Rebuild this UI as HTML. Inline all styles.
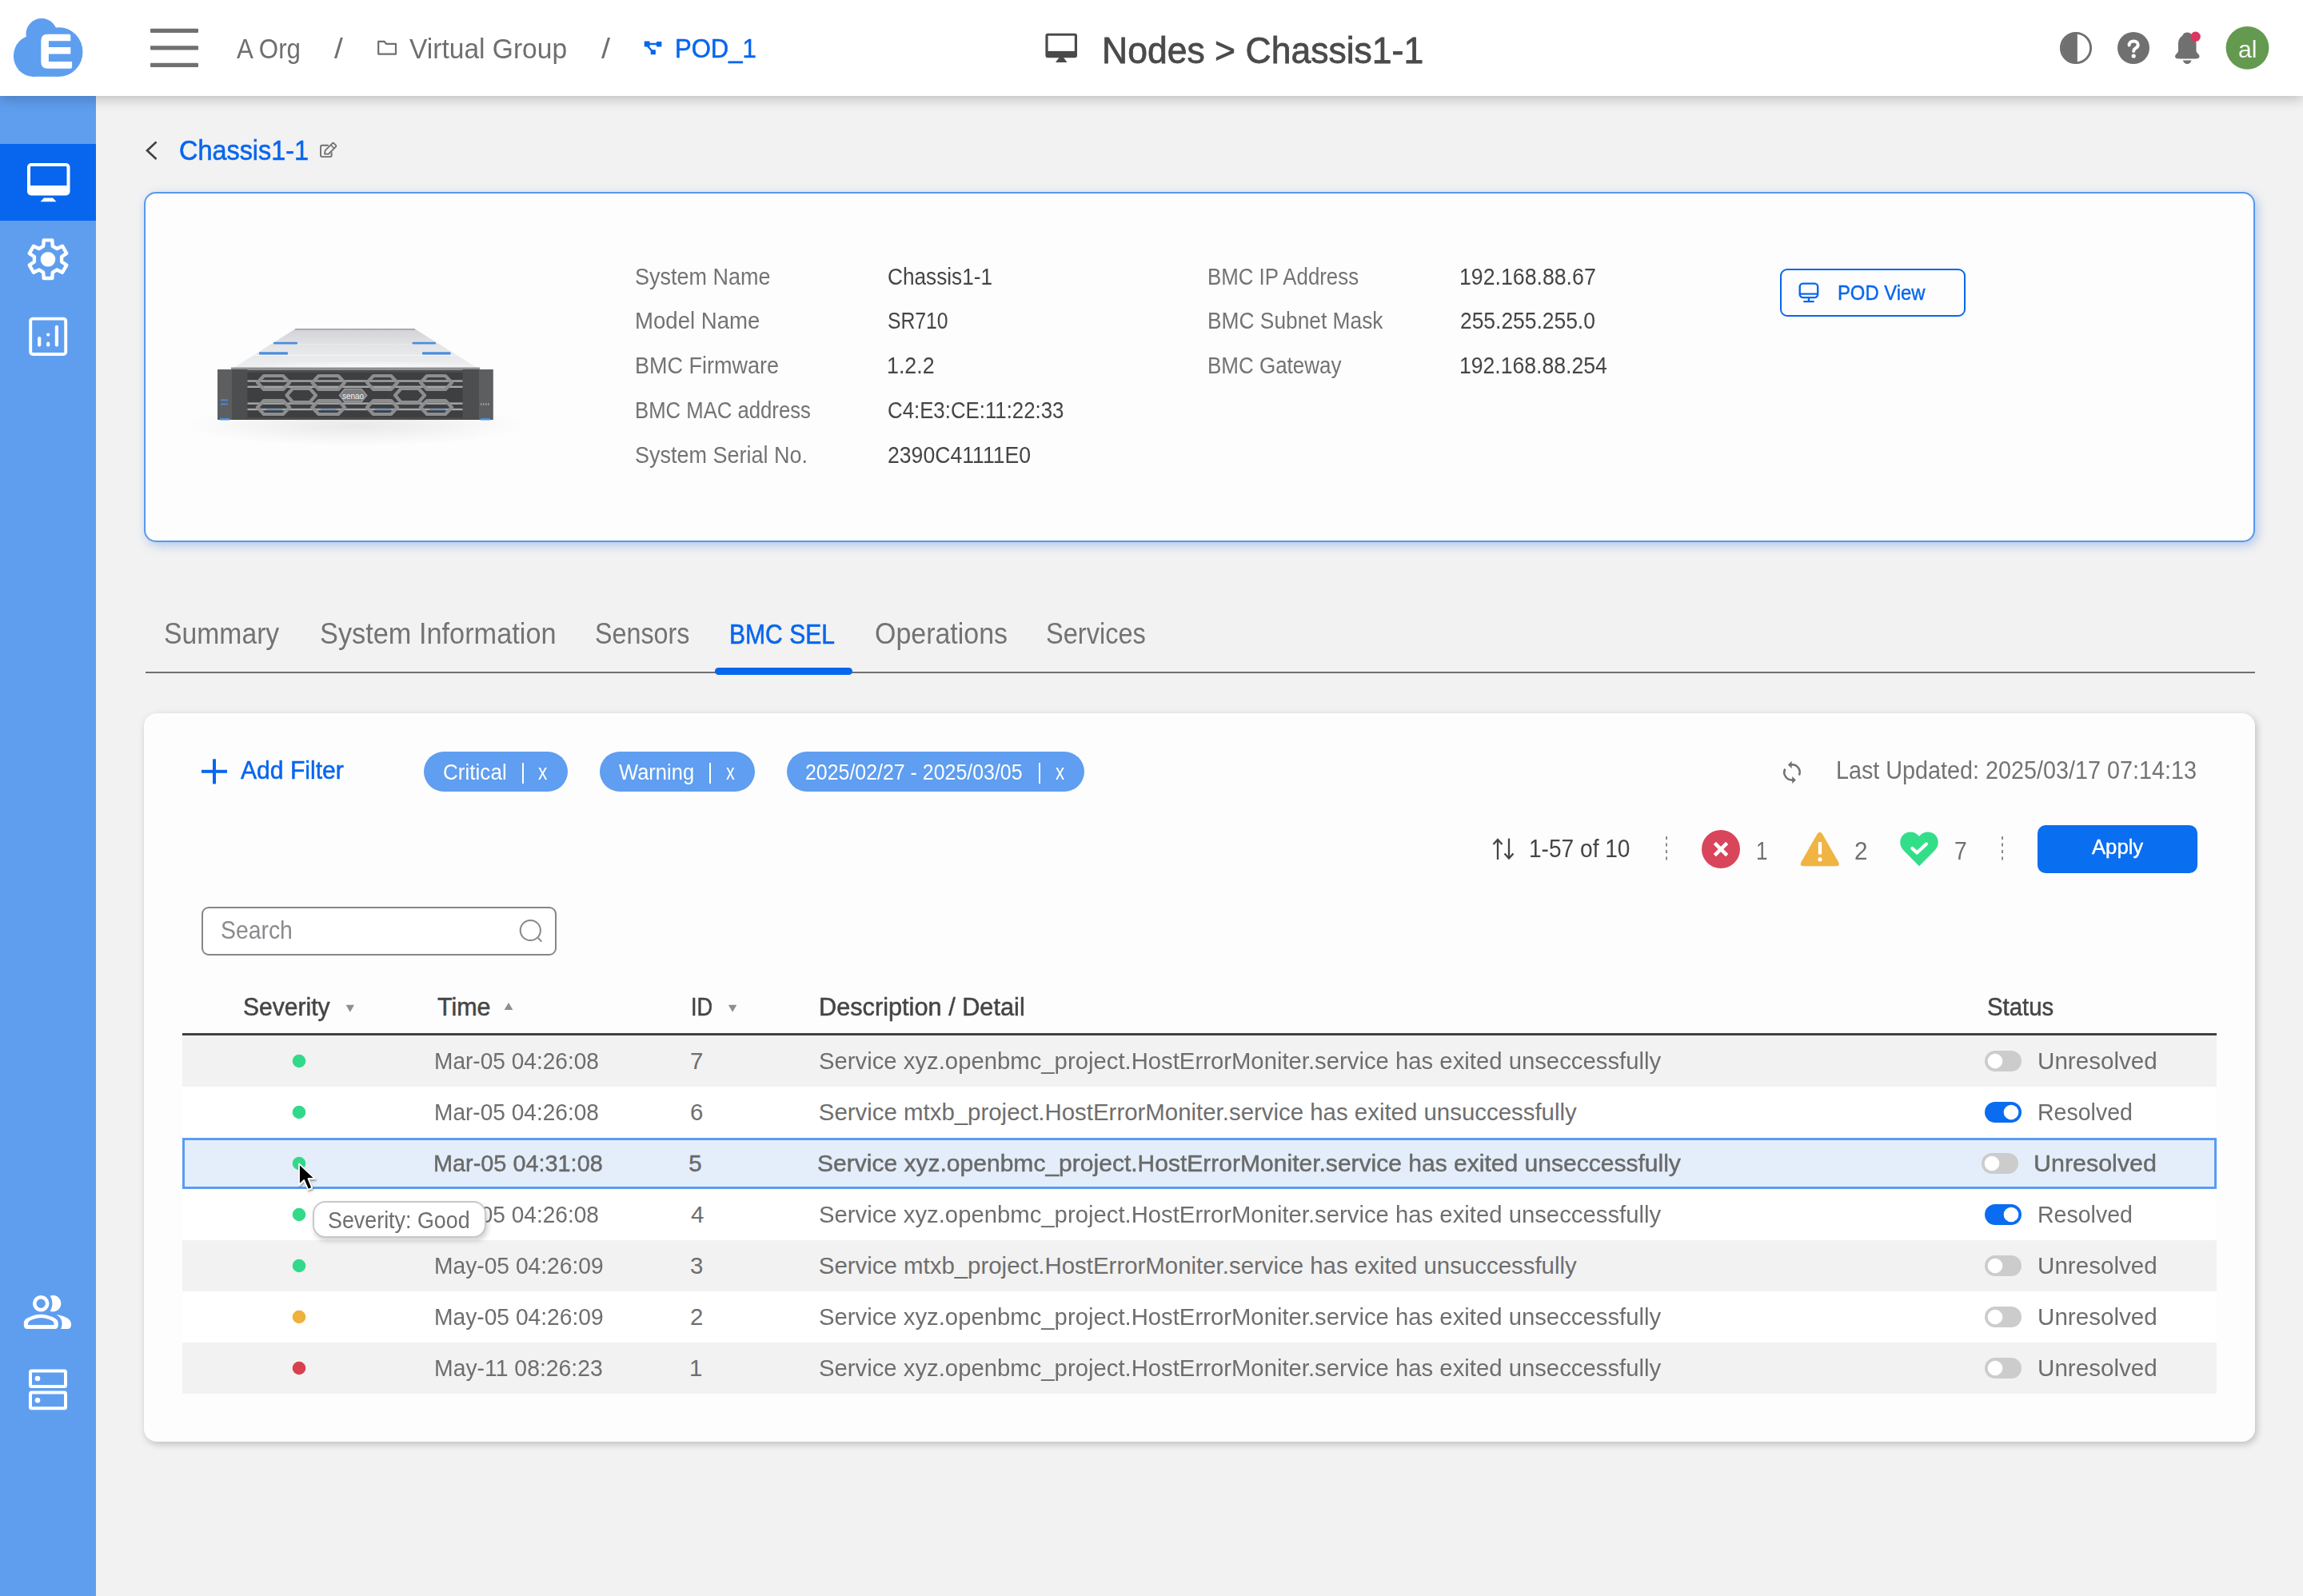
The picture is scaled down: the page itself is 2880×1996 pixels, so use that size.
<!DOCTYPE html>
<html><head><meta charset="utf-8">
<style>
html,body{margin:0;padding:0;}
body{width:2880px;height:1996px;position:relative;overflow:hidden;background:#f2f2f2;font-family:"Liberation Sans",sans-serif;}
.a{position:absolute;box-sizing:border-box;}
.t{position:absolute;white-space:nowrap;line-height:1;transform-origin:0 0;}
svg{position:absolute;left:0;top:0;}
</style></head><body>
<!-- sidebar -->
<div class="a" style="left:0;top:120px;width:120px;height:1876px;background:#5f9eef;"></div>
<div class="a" style="left:0;top:180px;width:120px;height:96px;background:#0866ee;"></div>
<!-- header -->
<div class="a" style="left:0;top:0;width:2880px;height:120px;background:#fff;box-shadow:0 3px 16px rgba(0,0,0,0.24);"></div>
<!-- card 1 -->
<div class="a" style="left:180px;top:240px;width:2640px;height:438px;background:#fdfdfd;border:2px solid #5599ef;border-radius:15px;box-shadow:3px 4px 13px rgba(70,130,220,0.38);"></div>
<div class="a" style="left:2226px;top:336px;width:232px;height:60px;border:2px solid #0866ee;border-radius:9px;background:#fdfdfd;"></div>
<!-- tabs -->
<div class="a" style="left:182px;top:840px;width:2638px;height:2px;background:#707070;"></div>
<div class="a" style="left:894px;top:835px;width:172px;height:9px;background:#0866ee;border-radius:5px;"></div>
<!-- card 2 -->
<div class="a" style="left:180px;top:892px;width:2640px;height:911px;background:#fdfdfd;border-radius:16px;box-shadow:2px 3px 10px rgba(0,0,0,0.22);"></div>
<!-- chips -->
<div class="a" style="left:530px;top:940px;width:180px;height:50px;background:#5f9ef0;border-radius:25px;"></div>
<div class="a" style="left:750px;top:940px;width:194px;height:50px;background:#5f9ef0;border-radius:25px;"></div>
<div class="a" style="left:984px;top:940px;width:372px;height:50px;background:#5f9ef0;border-radius:25px;"></div>
<div class="a" style="left:653px;top:954px;width:2px;height:26px;background:#fff;"></div>
<div class="a" style="left:887px;top:954px;width:2px;height:26px;background:#fff;"></div>
<div class="a" style="left:1298.5px;top:954px;width:2px;height:26px;background:#fff;"></div>
<!-- apply -->
<div class="a" style="left:2548px;top:1032px;width:200px;height:60px;background:#0a6ef0;border-radius:10px;"></div>
<!-- search -->
<div class="a" style="left:252px;top:1134px;width:444px;height:61px;border:2px solid #86868b;border-radius:9px;background:#fff;"></div>
<!-- table -->
<div class="a" style="left:228px;top:1292px;width:2544px;height:3px;background:#404040;"></div>
<div class="a" style="left:228px;top:1295px;width:2544px;height:63.5px;background:#f2f2f2;"></div>
<div class="a" style="left:228px;top:1358.5px;width:2544px;height:64.5px;background:#ffffff;"></div>
<div class="a" style="left:228px;top:1423px;width:2544px;height:64px;background:#e4eefa;border:3px solid #5b9cf0;"></div>
<div class="a" style="left:228px;top:1487px;width:2544px;height:64px;background:#ffffff;"></div>
<div class="a" style="left:228px;top:1551px;width:2544px;height:64px;background:#f2f2f2;"></div>
<div class="a" style="left:228px;top:1615px;width:2544px;height:64px;background:#ffffff;"></div>
<div class="a" style="left:228px;top:1679px;width:2544px;height:64px;background:#f2f2f2;"></div>
<svg width="2880" height="1996" viewBox="0 0 2880 1996">
<!-- logo -->
<g fill="#5e9eef">
<circle cx="52" cy="42.5" r="19.5"/>
<ellipse cx="73.8" cy="65" rx="29.7" ry="30.8"/>
<ellipse cx="41.2" cy="70" rx="24.3" ry="25.7"/>
<rect x="40" y="60" width="34" height="35.8"/>
</g>
<path fill="#fff" d="M59.5,42.7 L86.3,42.7 Q88.3,42.7 88.3,44.7 L88.3,51.2 L60.9,51.2 L60.9,58.9 L88.3,58.9 L88.3,67.4 L60.9,67.4 L60.9,77 L90.1,77 L90.1,83.8 Q90.1,85.8 88.1,85.8 L59.5,85.8 Q51.3,85.8 51.3,77.6 L51.3,50.9 Q51.3,42.7 59.5,42.7 Z"/>
<!-- hamburger -->
<g fill="#707070">
<rect x="188" y="35.8" width="60" height="5.2" rx="1"/>
<rect x="188" y="57.3" width="60" height="5.2" rx="1"/>
<rect x="188" y="78.8" width="60" height="5.2" rx="1"/>
</g>
<!-- folder -->
<path d="M473.2,51.8 L480.5,51.8 L483,54.8 L495,54.8 L495,67.6 L473.2,67.6 Z" fill="none" stroke="#6f6f6f" stroke-width="2.2" stroke-linejoin="round"/>
<!-- pod icon -->
<g fill="#0866ee">
<rect x="805.7" y="51.5" width="6.9" height="7" rx="0.8"/>
<rect x="820.9" y="52" width="6.5" height="6.4" rx="0.8"/>
<rect x="813.7" y="62.2" width="6.2" height="6" rx="0.8"/>
</g>
<g stroke="#0866ee" stroke-width="2.4">
<line x1="811" y1="55" x2="822" y2="55"/>
<line x1="809.5" y1="57" x2="815.5" y2="64"/>
</g>
<!-- header monitor -->
<rect x="1307.4" y="41.7" width="39.6" height="30.5" rx="3" fill="#4a4a4a"/>
<rect x="1310.6" y="44.7" width="33.2" height="19.2" fill="#fff"/>
<path d="M1324.5,72 L1330,72 L1334.5,78 L1320,78 Z" fill="#4a4a4a"/>
<!-- contrast -->
<circle cx="2596" cy="60" r="18.6" fill="none" stroke="#707070" stroke-width="2.9"/>
<path d="M2597.2,41.4 A18.6,18.6 0 0 0 2597.2,78.6 Z" fill="#707070"/>
<rect x="2595" y="41" width="2.8" height="38" fill="#707070"/>
<!-- help -->
<circle cx="2668" cy="60" r="20" fill="#707070"/>
<path d="M2662.6,56.4 C2662.6,53.2 2664.9,51.4 2668.2,51.4 C2671.5,51.4 2673.7,53.4 2673.7,56.2 C2673.7,58.8 2671.7,59.8 2670.1,60.7 C2668.9,61.4 2668.2,62.2 2668.2,64" fill="none" stroke="#fff" stroke-width="4" stroke-linecap="round"/>
<circle cx="2668.2" cy="70" r="2.6" fill="#fff"/>
<!-- bell -->
<path fill="#707070" d="M2735.2,40.5 C2731,40.5 2729.5,43.5 2729,45 C2725.5,47 2724,51 2724,55 L2724,63.5 C2724,66 2720,68 2720,70.5 C2720,72.5 2721.5,73.5 2725,73.5 L2745.5,73.5 C2749,73.5 2750.5,72.5 2750.5,70.5 C2750.5,68 2746.5,66 2746.5,63.5 L2746.5,55 C2746.5,51 2745,47 2741.5,45 C2741,43.5 2739.5,40.5 2735.2,40.5 Z"/>
<path fill="#707070" d="M2729.8,75.6 L2740.6,75.6 C2739.6,78.6 2737.8,80 2735.2,80 C2732.6,80 2730.8,78.6 2729.8,75.6 Z"/>
<circle cx="2745.6" cy="45.8" r="6.2" fill="#dc3560"/>
<!-- avatar -->
<circle cx="2810.5" cy="59.8" r="26.9" fill="#649a50"/>
<!-- sidebar: monitor -->
<rect x="36" y="206" width="49.5" height="36.5" rx="3" fill="none" stroke="#fff" stroke-width="4"/>
<rect x="36" y="232" width="49.5" height="12" rx="3" fill="#fff"/>
<path d="M55,247.5 L66,247.5 L70.5,252.2 L50.5,252.2 Z" fill="#fff"/>
<!-- sidebar: gear -->
<path d="M54.19,307.80 L54.72,300.38 L65.28,300.38 L65.81,307.80 L71.30,310.97 L77.99,307.72 L83.27,316.86 L77.11,321.03 L77.11,327.37 L83.27,331.54 L77.99,340.68 L71.30,337.43 L65.81,340.60 L65.28,348.02 L54.72,348.02 L54.19,340.60 L48.70,337.43 L42.01,340.68 L36.73,331.54 L42.89,327.37 L42.89,321.03 L36.73,316.86 L42.01,307.72 L48.70,310.97 Z" fill="none" stroke="#fff" stroke-width="4.4" stroke-linejoin="round"/>
<circle cx="60" cy="324.3" r="9.3" fill="#fff"/>
<!-- sidebar: chart -->
<rect x="38.2" y="398.6" width="44" height="44.4" rx="3" fill="none" stroke="#fff" stroke-width="3.9"/>
<g stroke="#fff" stroke-width="4.2" stroke-linecap="round">
<line x1="49.2" y1="423" x2="49.2" y2="431.5"/>
<line x1="60.2" y1="429.5" x2="60.2" y2="431.5"/>
<line x1="60.2" y1="418.5" x2="60.2" y2="418.6"/>
<line x1="70.9" y1="408.8" x2="70.9" y2="431.5"/>
</g>
<!-- sidebar: users -->
<circle cx="51.2" cy="1630.3" r="8" fill="none" stroke="#fff" stroke-width="4.6"/>
<path fill="#fff" d="M62.7,1620.6 A10.2,10.2 0 1 1 62.7,1639.8 A17.9,17.9 0 0 0 62.7,1620.6 Z"/>
<path fill="#fff" fill-rule="evenodd" d="M34,1662 L68.5,1662 Q72.8,1662 72.8,1657 L72.8,1655 C72.8,1650 68,1648 64,1646.5 C60,1645 56,1643.8 51.2,1643.8 C46,1643.8 42,1645 38,1646.8 C34,1648.5 29.8,1650 29.8,1655 L29.8,1657 Q29.8,1662 34,1662 Z M35,1657 L67.5,1657 L67.5,1655.5 C67.5,1653 65,1651.5 62,1650.3 C58.5,1648.8 55,1648.2 51.2,1648.2 C47.5,1648.2 44,1648.8 40.5,1650.3 C37.5,1651.5 35,1653 35,1655.5 Z"/>
<path fill="#fff" d="M70.5,1644 C78,1645.5 89,1648 89,1656 L89,1657 Q89,1662 84,1662 L76,1662 C77.5,1659.5 77.5,1657 77.5,1655 C77.5,1650 74.5,1646.5 70.5,1644 Z"/>
<!-- sidebar: server -->
<rect x="38" y="1714.5" width="44" height="19.5" rx="1.5" fill="none" stroke="#fff" stroke-width="4"/>
<rect x="38" y="1741.6" width="44" height="19.7" rx="1.5" fill="none" stroke="#fff" stroke-width="4"/>
<circle cx="47" cy="1724" r="3.3" fill="#fff"/>
<circle cx="47" cy="1751.3" r="3.3" fill="#fff"/>
<!-- back chevron -->
<path d="M195.5,177.5 L184,188.2 L195.5,199" fill="none" stroke="#404040" stroke-width="2.6"/>
<!-- edit icon -->
<path d="M410.8,181.8 L403,181.8 Q401,181.8 401,183.8 L401,194.1 Q401,196.1 403,196.1 L412.7,196.1 Q414.7,196.1 414.7,194.1 L414.7,190.4" fill="none" stroke="#707070" stroke-width="1.9"/>
<path d="M406,192.6 L406.7,188.2 L415.6,179.3 Q416.6,178.3 417.6,179.3 L419.9,181.6 Q420.9,182.6 419.9,183.6 L411,192.5 Z" fill="none" stroke="#707070" stroke-width="1.8" stroke-linejoin="round"/>
<path d="M413.6,181.3 L417.9,185.6" stroke="#707070" stroke-width="1.6"/>
<defs>
<linearGradient id="topg" x1="0" y1="0" x2="0" y2="1">
<stop offset="0" stop-color="#d2d3d6"/><stop offset="0.45" stop-color="#e4e5e7"/><stop offset="1" stop-color="#eeeff0"/>
</linearGradient>
<radialGradient id="hl" cx="0.55" cy="0.9" r="0.5">
<stop offset="0" stop-color="#fff" stop-opacity="0.9"/><stop offset="1" stop-color="#fff" stop-opacity="0"/>
</radialGradient>
<radialGradient id="shd" cx="0.5" cy="0.5" r="0.5">
<stop offset="0" stop-color="#000" stop-opacity="0.08"/><stop offset="1" stop-color="#000" stop-opacity="0"/>
</radialGradient>
<linearGradient id="wbg" x1="0" y1="0" x2="0" y2="1">
<stop offset="0" stop-color="#fff" stop-opacity="0"/><stop offset="0.2" stop-color="#fff" stop-opacity="1"/><stop offset="1" stop-color="#fff" stop-opacity="1"/>
</linearGradient>
</defs>
<ellipse cx="444" cy="532" rx="215" ry="26" fill="url(#shd)"/>
<path d="M369,411.5 L519,411.5 L600,462 L289,462 Z" fill="url(#topg)"/>
<path d="M300,444 L588,444 L600,462 L289,462 Z" fill="url(#hl)"/>
<line x1="369" y1="411.8" x2="519" y2="411.8" stroke="#9c9c9c" stroke-width="1.4"/>
<line x1="316" y1="444.4" x2="572" y2="444.4" stroke="#f6f6f6" stroke-width="1"/>
<line x1="343" y1="430.8" x2="546" y2="430.8" stroke="#ececec" stroke-width="0.8"/>
<g fill="#4a8ddf">
<rect x="342" y="427.8" width="30" height="2.6" rx="1"/>
<rect x="515.5" y="427.8" width="29.5" height="2.6" rx="1"/>
<rect x="324" y="440.3" width="36" height="3.2" rx="1"/>
<rect x="528" y="440.3" width="35.5" height="3.2" rx="1"/>
</g>
<rect x="272" y="462" width="344.5" height="63" fill="#4a4b4d"/>
<rect x="289" y="459.5" width="311" height="3.5" fill="#8e8f91"/>
<rect x="272" y="462" width="18" height="63" fill="#5d5e60"/>
<rect x="599" y="462" width="17.5" height="63" fill="#5d5e60"/>
<rect x="290" y="462" width="19.5" height="61.5" fill="#4d4e50"/>
<rect x="578.5" y="462" width="20.5" height="61.5" fill="#4d4e50"/>
<rect x="309.5" y="466" width="269" height="56" fill="#3e3f41"/>
<g fill="#a6a7a9">
<rect x="309.5" y="475.3" width="269" height="2.4"/>
<rect x="309.5" y="482.6" width="269" height="2.4"/>
<rect x="309.5" y="503.4" width="269" height="2.4"/>
<rect x="309.5" y="510.8" width="269" height="2.4"/>
</g>
<g fill="none" stroke="#8d8e90" stroke-width="4.2" stroke-linejoin="round">
<path d="M322,478.5 L330,470 L354,470 L362,478.5 L354,487 L330,487 Z"/>
<path d="M390.5,478.5 L398.5,470 L423,470 L431,478.5 L423,487 L398.5,487 Z"/>
<path d="M459,478.5 L467,470 L489,470 L497,478.5 L489,487 L467,487 Z"/>
<path d="M526,478.5 L534,470 L557,470 L565,478.5 L557,487 L534,487 Z"/>
<path d="M358.5,494.4 L366,486 L387.5,486 L395,494.4 L387.5,503 L366,503 Z"/>
<path d="M494,494.4 L501.5,486 L523.5,486 L531,494.4 L523.5,503 L501.5,503 Z"/>
<path d="M322,509.5 L330,501 L354,501 L362,509.5 L354,518 L330,518 Z"/>
<path d="M390.5,509.5 L398.5,501 L423,501 L431,509.5 L423,518 L398.5,518 Z"/>
<path d="M459,509.5 L467,501 L489,501 L497,509.5 L489,518 L467,518 Z"/>
<path d="M526,509.5 L534,501 L557,501 L565,509.5 L557,518 L534,518 Z"/>
</g>
<path d="M424.5,494.4 L431,486.5 L452,486.5 L458.8,494.4 L452,502.5 L431,502.5 Z" fill="#7b7c7e" stroke="#98999b" stroke-width="1.5"/>
<text x="441.5" y="498.8" font-family="Liberation Sans" font-size="10" fill="#f2f2f2" text-anchor="middle">senao</text>
<g fill="#4a8ddf">
<rect x="333" y="511.5" width="20" height="1.6"/><rect x="401" y="511.5" width="20" height="1.6"/>
<rect x="469" y="511.5" width="20" height="1.6"/><rect x="537" y="511.5" width="20" height="1.6"/>
<rect x="275" y="523" width="12" height="2.5"/><rect x="601" y="523" width="12" height="2.5"/>
<rect x="276" y="499.5" width="9" height="1.8"/><rect x="276" y="504.5" width="9" height="1.8"/>
</g>
<g fill="#9a9a9a"><rect x="601" y="504" width="1.5" height="3"/><rect x="604" y="504" width="1.5" height="3"/><rect x="607" y="504" width="1.5" height="3"/><rect x="610" y="504" width="1.5" height="3"/></g>

<!-- pod view monitor -->
<rect x="2250.7" y="354.6" width="22.5" height="17.5" rx="4" fill="none" stroke="#0866ee" stroke-width="2.4"/>
<line x1="2251" y1="367.6" x2="2273" y2="367.6" stroke="#0866ee" stroke-width="2.2"/>
<line x1="2262" y1="372.5" x2="2262" y2="377" stroke="#0866ee" stroke-width="2.4"/>
<line x1="2256.2" y1="377.2" x2="2267.8" y2="377.2" stroke="#0866ee" stroke-width="2.2" stroke-linecap="round"/>
<!-- add filter plus -->
<g stroke="#0866ee" stroke-width="4">
<line x1="252" y1="964.8" x2="284" y2="964.8"/>
<line x1="268" y1="949.3" x2="268" y2="980.4"/>
</g>
<!-- refresh -->
<g fill="none" stroke="#707070" stroke-width="2.5">
<path d="M2240,956.3 A9.5,9.5 0 0 1 2249.9,969.4"/>
<path d="M2232.3,961.6 A9.5,9.5 0 0 0 2242,975.3"/>
</g>
<path d="M2235.9,956.4 L2240.6,951.8 L2240.6,960.9 Z" fill="#707070"/>
<path d="M2245.9,975.5 L2241.2,970.9 L2241.2,980 Z" fill="#707070"/>
<!-- sort -->
<g fill="none" stroke="#454545" stroke-width="2.3">
<path d="M1873,1075 L1873,1050.5"/>
<path d="M1867.5,1056 L1873,1050 L1878.5,1056"/>
<path d="M1887,1048.6 L1887,1073"/>
<path d="M1881.5,1067.5 L1887,1073.5 L1892.5,1067.5"/>
</g>
<!-- dotted separators -->
<line x1="2084" y1="1046" x2="2084" y2="1078" stroke="#8a8a8a" stroke-width="2" stroke-dasharray="4,4.5"/>
<line x1="2504" y1="1046" x2="2504" y2="1078" stroke="#8a8a8a" stroke-width="2" stroke-dasharray="4,4.5"/>
<!-- error circle -->
<circle cx="2152" cy="1062" r="24" fill="#d9455a"/>
<g stroke="#fff" stroke-width="4.5"><line x1="2144.3" y1="1054.3" x2="2159.7" y2="1069.7"/><line x1="2159.7" y1="1054.3" x2="2144.3" y2="1069.7"/></g>
<!-- warning triangle -->
<path d="M2272.5,1043 Q2275.8,1038.5 2279,1043 L2299,1078 Q2301.5,1083.3 2296,1083.3 L2255.5,1083.3 Q2250,1083.3 2252.5,1078 Z" fill="#f0b444"/>
<rect x="2273.8" y="1053" width="4.4" height="15.5" rx="1" fill="#fff"/>
<circle cx="2276" cy="1074.8" r="2.6" fill="#fff"/>
<!-- heart -->
<path d="M2400,1083.3 L2380.5,1063.5 C2374.5,1057.5 2375,1048 2381,1043.3 C2386.5,1039 2395,1039.8 2400,1046 C2405,1039.8 2413.5,1039 2419,1043.3 C2425,1048 2425.5,1057.5 2419.5,1063.5 Z" fill="#33de88"/>
<path d="M2391.5,1061 L2397.2,1066.5 L2409,1055.5" fill="none" stroke="#fff" stroke-width="4.3" stroke-linecap="round" stroke-linejoin="round"/>
<!-- search icon -->
<circle cx="663.3" cy="1163.5" r="12.6" fill="none" stroke="#86868b" stroke-width="2"/>
<line x1="673" y1="1173" x2="677.2" y2="1177.6" stroke="#86868b" stroke-width="2"/>
<!-- sort arrows -->
<g fill="#8e8e93">
<path d="M432.6,1256.7 L443,1256.7 L437.8,1265.8 Z"/>
<path d="M630.6,1263 L641.4,1263 L636,1254 Z"/>
<path d="M910.9,1256.7 L921.3,1256.7 L916.1,1265.8 Z"/>
</g>
<!-- dots -->
<circle cx="374" cy="1327" r="8.3" fill="#33d98a"/>
<circle cx="374" cy="1391" r="8.3" fill="#33d98a"/>
<circle cx="374" cy="1455" r="8.3" fill="#33d98a"/>
<circle cx="374" cy="1519" r="8.3" fill="#33d98a"/>
<circle cx="374" cy="1583" r="8.3" fill="#33d98a"/>
<circle cx="374" cy="1647" r="8.3" fill="#f0b03c"/>
<circle cx="374" cy="1711" r="8.3" fill="#d9404f"/>
<rect x="2482" y="1314" width="46" height="26" rx="13" fill="#cccccc"/><circle cx="2495" cy="1327" r="9.3" fill="#fff"/>
<rect x="2482" y="1378" width="46" height="26" rx="13" fill="#0a6cf0"/><circle cx="2515" cy="1391" r="9.3" fill="#fff"/>
<rect x="2478" y="1442" width="46" height="26" rx="13" fill="#cccccc"/><circle cx="2491" cy="1455" r="9.3" fill="#fff"/>
<rect x="2482" y="1506" width="46" height="26" rx="13" fill="#0a6cf0"/><circle cx="2515" cy="1519" r="9.3" fill="#fff"/>
<rect x="2482" y="1570" width="46" height="26" rx="13" fill="#cccccc"/><circle cx="2495" cy="1583" r="9.3" fill="#fff"/>
<rect x="2482" y="1634" width="46" height="26" rx="13" fill="#cccccc"/><circle cx="2495" cy="1647" r="9.3" fill="#fff"/>
<rect x="2482" y="1698" width="46" height="26" rx="13" fill="#cccccc"/><circle cx="2495" cy="1711" r="9.3" fill="#fff"/>
</svg>

<div class="t" style="left:296.20px;top:43.62px;font-size:34.56px;color:#6f6f6f;transform:scaleX(0.9055);">A Org</div>
<div class="t" style="left:418.40px;top:43.62px;font-size:34.56px;color:#6f6f6f;transform:scaleX(1.1300);">/</div>
<div class="t" style="left:512.40px;top:42.80px;font-size:35.29px;color:#6f6f6f;transform:scaleX(0.9511);">Virtual Group</div>
<div class="t" style="left:751.80px;top:43.62px;font-size:34.56px;color:#6f6f6f;transform:scaleX(1.1500);">/</div>
<div class="t" style="left:843.62px;top:44.13px;font-size:33.73px;color:#0866ee;-webkit-text-stroke:0.56px #0866ee;transform:scaleX(0.9208);">POD_1</div>
<div class="t" style="left:1378.32px;top:39.93px;font-size:46.79px;color:#4a4a4a;-webkit-text-stroke:0.78px #4a4a4a;transform:scaleX(0.9519);">Nodes > Chassis1-1</div>
<div class="t" style="left:2798.97px;top:47.20px;font-size:29.41px;color:#f6f6f6;transform:scaleX(1.0317);">al</div>
<div class="t" style="left:224.47px;top:170.50px;font-size:35.88px;color:#0866ee;-webkit-text-stroke:0.60px #0866ee;transform:scaleX(0.9035);">Chassis1-1</div>
<div class="t" style="left:794.47px;top:331.75px;font-size:29.12px;color:#737373;transform:scaleX(0.9269);">System Name</div>
<div class="t" style="left:1110.10px;top:331.75px;font-size:29.12px;color:#454545;transform:scaleX(0.8995);">Chassis1-1</div>
<div class="t" style="left:793.50px;top:387.35px;font-size:29.12px;color:#737373;transform:scaleX(0.9479);">Model Name</div>
<div class="t" style="left:1110.15px;top:387.35px;font-size:29.12px;color:#454545;transform:scaleX(0.8495);">SR710</div>
<div class="t" style="left:793.54px;top:443.25px;font-size:29.12px;color:#737373;transform:scaleX(0.9279);">BMC Firmware</div>
<div class="t" style="left:1109.16px;top:443.25px;font-size:29.12px;color:#454545;transform:scaleX(0.9211);">1.2.2</div>
<div class="t" style="left:793.63px;top:499.25px;font-size:29.12px;color:#737373;transform:scaleX(0.8826);">BMC MAC address</div>
<div class="t" style="left:1110.11px;top:499.25px;font-size:29.12px;color:#454545;transform:scaleX(0.8865);">C4:E3:CE:11:22:33</div>
<div class="t" style="left:794.47px;top:554.85px;font-size:29.12px;color:#737373;transform:scaleX(0.9275);">System Serial No.</div>
<div class="t" style="left:1110.09px;top:554.85px;font-size:29.12px;color:#454545;transform:scaleX(0.9144);">2390C41111E0</div>
<div class="t" style="left:1510.12px;top:331.75px;font-size:29.12px;color:#737373;transform:scaleX(0.8876);">BMC IP Address</div>
<div class="t" style="left:1824.97px;top:331.75px;font-size:29.12px;color:#454545;transform:scaleX(0.9171);">192.168.88.67</div>
<div class="t" style="left:1510.09px;top:387.35px;font-size:29.12px;color:#737373;transform:scaleX(0.9046);">BMC Subnet Mask</div>
<div class="t" style="left:1825.89px;top:387.35px;font-size:29.12px;color:#454545;transform:scaleX(0.9072);">255.255.255.0</div>
<div class="t" style="left:1510.11px;top:443.25px;font-size:29.12px;color:#737373;transform:scaleX(0.8926);">BMC Gateway</div>
<div class="t" style="left:1824.97px;top:443.25px;font-size:29.12px;color:#454545;transform:scaleX(0.9133);">192.168.88.254</div>
<div class="t" style="left:2298.09px;top:352.97px;font-size:26.27px;color:#0866ee;-webkit-text-stroke:0.44px #0866ee;transform:scaleX(0.9061);">POD View</div>
<div class="t" style="left:204.58px;top:775.30px;font-size:36.47px;color:#737373;transform:scaleX(0.9243);">Summary</div>
<div class="t" style="left:400.36px;top:775.30px;font-size:36.47px;color:#737373;transform:scaleX(0.9409);">System Information</div>
<div class="t" style="left:744.12px;top:775.30px;font-size:36.47px;color:#737373;transform:scaleX(0.8848);">Sensors</div>
<div class="t" style="left:1094.07px;top:775.30px;font-size:36.47px;color:#737373;transform:scaleX(0.9304);">Operations</div>
<div class="t" style="left:1308.11px;top:775.30px;font-size:36.47px;color:#737373;transform:scaleX(0.8924);">Services</div>
<div class="t" style="left:912.36px;top:776.04px;font-size:35.60px;color:#0866ee;-webkit-text-stroke:0.60px #0866ee;transform:scaleX(0.8448);">BMC SEL</div>
<div class="t" style="left:300.85px;top:948.69px;font-size:30.72px;color:#0866ee;-webkit-text-stroke:0.51px #0866ee;transform:scaleX(0.9804);">Add Filter</div>
<div class="t" style="left:554.05px;top:951.75px;font-size:27.35px;color:#ffffff;transform:scaleX(0.9536);">Critical</div>
<div class="t" style="left:673.40px;top:951.75px;font-size:27.35px;color:#ffffff;transform:scaleX(0.8286);">x</div>
<div class="t" style="left:774.20px;top:951.75px;font-size:27.35px;color:#ffffff;transform:scaleX(0.9338);">Warning</div>
<div class="t" style="left:908.20px;top:951.75px;font-size:27.35px;color:#ffffff;transform:scaleX(0.7857);">x</div>
<div class="t" style="left:1007.09px;top:951.75px;font-size:27.35px;color:#ffffff;transform:scaleX(0.9111);">2025/02/27 - 2025/03/05</div>
<div class="t" style="left:1320.00px;top:951.75px;font-size:27.35px;color:#ffffff;transform:scaleX(0.8143);">x</div>
<div class="t" style="left:2295.97px;top:948.25px;font-size:31.47px;color:#737373;transform:scaleX(0.9138);">Last Updated: 2025/03/17 07:14:13</div>
<div class="t" style="left:1911.88px;top:1046.75px;font-size:30.88px;color:#454545;transform:scaleX(0.9097);">1-57 of 10</div>
<div class="t" style="left:2196.29px;top:1049.12px;font-size:30.44px;color:#707070;transform:scaleX(0.8571);">1</div>
<div class="t" style="left:2319.43px;top:1049.12px;font-size:30.44px;color:#707070;transform:scaleX(0.9733);">2</div>
<div class="t" style="left:2443.97px;top:1049.12px;font-size:30.44px;color:#707070;transform:scaleX(0.9267);">7</div>
<div class="t" style="left:2615.51px;top:1047.04px;font-size:25.84px;color:#ffffff;-webkit-text-stroke:0.43px #ffffff;transform:scaleX(0.9935);">Apply</div>
<div class="t" style="left:276.22px;top:1147.22px;font-size:32.21px;color:#8a8a8e;transform:scaleX(0.8811);">Search</div>
<div class="t" style="left:304.26px;top:1244.14px;font-size:30.43px;color:#454545;-webkit-text-stroke:0.51px #454545;transform:scaleX(0.9878);">Severity</div>
<div class="t" style="left:547.05px;top:1244.14px;font-size:30.43px;color:#454545;-webkit-text-stroke:0.51px #454545;">Time</div>
<div class="t" style="left:864.44px;top:1244.14px;font-size:30.43px;color:#454545;-webkit-text-stroke:0.51px #454545;transform:scaleX(0.8942);">ID</div>
<div class="t" style="left:1023.74px;top:1244.14px;font-size:30.43px;color:#454545;-webkit-text-stroke:0.51px #454545;transform:scaleX(1.0094);">Description / Detail</div>
<div class="t" style="left:2484.58px;top:1244.14px;font-size:30.43px;color:#454545;-webkit-text-stroke:0.51px #454545;transform:scaleX(0.9648);">Status</div>
<div class="t" style="left:542.89px;top:1312.00px;font-size:29.41px;color:#6e6e6e;transform:scaleX(0.9544);">Mar-05 04:26:08</div>
<div class="t" style="left:863.00px;top:1312.00px;font-size:29.41px;color:#6e6e6e;">7</div>
<div class="t" style="left:1023.80px;top:1312.00px;font-size:29.41px;color:#6e6e6e;transform:scaleX(0.9959);">Service xyz.openbmc_project.HostErrorMoniter.service has exited unseccessfully</div>
<div class="t" style="left:2547.59px;top:1312.00px;font-size:29.41px;color:#6e6e6e;transform:scaleX(1.0070);">Unresolved</div>
<div class="t" style="left:542.89px;top:1376.00px;font-size:29.41px;color:#6e6e6e;transform:scaleX(0.9544);">Mar-05 04:26:08</div>
<div class="t" style="left:863.00px;top:1376.00px;font-size:29.41px;color:#6e6e6e;">6</div>
<div class="t" style="left:1023.80px;top:1376.00px;font-size:29.41px;color:#6e6e6e;">Service mtxb_project.HostErrorMoniter.service has exited unsuccessfully</div>
<div class="t" style="left:2547.66px;top:1376.00px;font-size:29.41px;color:#6e6e6e;transform:scaleX(0.9695);">Resolved</div>
<div class="t" style="left:542.18px;top:1439.99px;font-size:29.42px;color:#6a6a6a;-webkit-text-stroke:0.49px #6a6a6a;transform:scaleX(0.9812);">Mar-05 04:31:08</div>
<div class="t" style="left:861.25px;top:1439.99px;font-size:29.42px;color:#6a6a6a;-webkit-text-stroke:0.49px #6a6a6a;">5</div>
<div class="t" style="left:1021.63px;top:1439.99px;font-size:29.42px;color:#6a6a6a;-webkit-text-stroke:0.49px #6a6a6a;transform:scaleX(1.0212);">Service xyz.openbmc_project.HostErrorMoniter.service has exited unseccessfully</div>
<div class="t" style="left:2543.18px;top:1439.99px;font-size:29.42px;color:#6a6a6a;-webkit-text-stroke:0.49px #6a6a6a;transform:scaleX(1.0351);">Unresolved</div>
<div class="t" style="left:542.89px;top:1504.00px;font-size:29.41px;color:#6e6e6e;transform:scaleX(0.9544);">Mar-05 04:26:08</div>
<div class="t" style="left:864.00px;top:1504.00px;font-size:29.41px;color:#6e6e6e;">4</div>
<div class="t" style="left:1023.80px;top:1504.00px;font-size:29.41px;color:#6e6e6e;transform:scaleX(0.9959);">Service xyz.openbmc_project.HostErrorMoniter.service has exited unseccessfully</div>
<div class="t" style="left:2547.66px;top:1504.00px;font-size:29.41px;color:#6e6e6e;transform:scaleX(0.9695);">Resolved</div>
<div class="t" style="left:542.88px;top:1568.00px;font-size:29.41px;color:#6e6e6e;transform:scaleX(0.9593);">May-05 04:26:09</div>
<div class="t" style="left:863.00px;top:1568.00px;font-size:29.41px;color:#6e6e6e;">3</div>
<div class="t" style="left:1023.80px;top:1568.00px;font-size:29.41px;color:#6e6e6e;">Service mtxb_project.HostErrorMoniter.service has exited unsuccessfully</div>
<div class="t" style="left:2547.59px;top:1568.00px;font-size:29.41px;color:#6e6e6e;transform:scaleX(1.0070);">Unresolved</div>
<div class="t" style="left:542.88px;top:1632.00px;font-size:29.41px;color:#6e6e6e;transform:scaleX(0.9593);">May-05 04:26:09</div>
<div class="t" style="left:863.00px;top:1632.00px;font-size:29.41px;color:#6e6e6e;">2</div>
<div class="t" style="left:1023.80px;top:1632.00px;font-size:29.41px;color:#6e6e6e;transform:scaleX(0.9959);">Service xyz.openbmc_project.HostErrorMoniter.service has exited unseccessfully</div>
<div class="t" style="left:2547.59px;top:1632.00px;font-size:29.41px;color:#6e6e6e;transform:scaleX(1.0070);">Unresolved</div>
<div class="t" style="left:542.87px;top:1696.00px;font-size:29.41px;color:#6e6e6e;transform:scaleX(0.9646);">May-11 08:26:23</div>
<div class="t" style="left:862.00px;top:1696.00px;font-size:29.41px;color:#6e6e6e;">1</div>
<div class="t" style="left:1023.80px;top:1696.00px;font-size:29.41px;color:#6e6e6e;transform:scaleX(0.9959);">Service xyz.openbmc_project.HostErrorMoniter.service has exited unseccessfully</div>
<div class="t" style="left:2547.59px;top:1696.00px;font-size:29.41px;color:#6e6e6e;transform:scaleX(1.0070);">Unresolved</div>
<!-- tooltip -->
<div class="a" style="left:390.5px;top:1502.3px;width:217.2px;height:46.2px;background:#fff;border:2px solid #c8c8c8;border-radius:16px;box-shadow:2px 4px 6px rgba(0,0,0,0.18);"></div>
<div class="t" style="left:410.47px;top:1511.70px;font-size:28.82px;color:#6e6e6e;transform:scaleX(0.9319);">Severity: Good</div>
<svg width="2880" height="1996" style="position:absolute;left:0;top:0"><defs><filter id="cs" x="-50%" y="-50%" width="200%" height="200%"><feDropShadow dx="1" dy="2" stdDeviation="1.2" flood-opacity="0.35"/></filter></defs><path filter="url(#cs)" d="M374,1455.4 L374,1482 L380.2,1476 L385.3,1487.8 L390.3,1485.6 L385.4,1474 L394,1474 Z" fill="#000" stroke="#fff" stroke-width="1.8" stroke-linejoin="round"/></svg>
</body></html>
